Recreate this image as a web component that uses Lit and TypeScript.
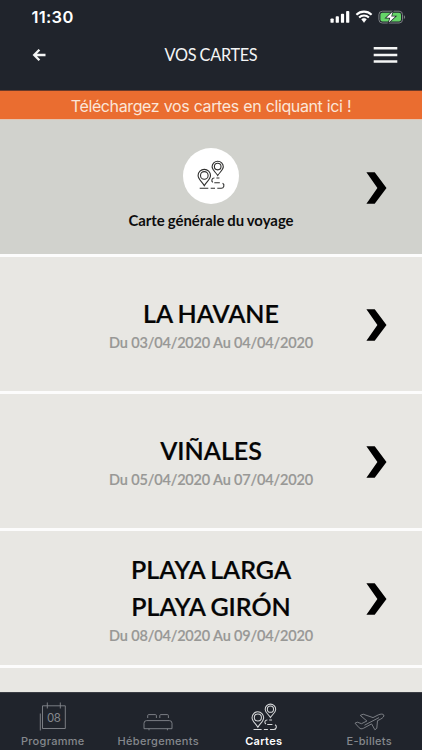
import { LitElement, html, css, svg } from "lit";
import { customElement, property } from "lit/decorators.js";

const routeGlyph = svg`
  <path d="M7.3 25.7C5.2 22 1.1 19.3 1.1 15.6a6.2 6.2 0 0 1 12.4 0C13.5 19.3 9.4 22 7.3 25.7Z"/>
  <circle cx="7.3" cy="15.4" r="3.8"/>
  <path d="M20.7 15.5C18.8 12.3 15.1 10 15.1 6.8a5.6 5.6 0 0 1 11.2 0C26.3 10 22.6 12.3 20.7 15.5Z"/>
  <circle cx="20.7" cy="6.6" r="3.3"/>
  <path d="M2.7 28.3H11.3M13.7 28.3H18M20.3 28.3H24a2.75 2.75 0 0 0 1.6-5.1M17.3 22.8H22.8M15.9 22.4a2.4 2.4 0 0 1 1.5-4.4M19.4 18H22.4"/>`;

@customElement("route-icon")
class RouteIcon extends LitElement {
  @property({ type: Number }) width = 28;
  static styles = css`
    :host { display: block; line-height: 0; }
    svg { fill: none; stroke: currentColor; stroke-width: 1.1; overflow: visible; }
  `;
  render() {
    return html`<svg width=${this.width} height=${(this.width * 30) / 28} viewBox="0 0 28 30">${routeGlyph}</svg>`;
  }
}

@customElement("status-bar")
class StatusBar extends LitElement {
  static styles = css`
    :host { display: flex; justify-content: space-between; align-items: center; height: 34px; padding: 0 16px 0 31.5px; color: #fff; }
    .time { font: 600 16.5px/20px Inter, sans-serif; letter-spacing: 0.3px; }
    svg { display: block; }
  `;
  render() {
    return html`
      <span class="time">11:30</span>
      <svg width="76" height="14" viewBox="0 0 76 14">
        <g fill="#fff">
          <rect x="0.5" y="8.4" width="3.2" height="4.4" rx="0.9"/>
          <rect x="5.7" y="6.2" width="3.2" height="6.6" rx="0.9"/>
          <rect x="10.9" y="3.8" width="3.2" height="9" rx="0.9"/>
          <rect x="16.1" y="1" width="3.2" height="11.8" rx="0.9"/>
          <path d="M31.6 9.2a3.6 3.6 0 0 1 4.8 0L34 12.4Z" stroke="#fff" stroke-width="0.5" stroke-linejoin="round"/>
        </g>
        <g fill="none" stroke="#fff" stroke-width="2.1">
          <path d="M26.4 4.7a10.9 10.9 0 0 1 15.2 0"/>
          <path d="M29.1 7.5a7 7 0 0 1 9.8 0"/>
        </g>
        <rect x="48.9" y="1.2" width="23.6" height="11.8" rx="3.4" fill="none" stroke="#7b7f83" stroke-width="1"/>
        <rect x="50.4" y="2.7" width="20.6" height="8.8" rx="2" fill="#65d468"/>
        <path d="M73.9 5.2c1.6.6 1.6 3.2 0 3.8Z" fill="#7b7f83"/>
        <path d="M62.6 1.8 56.3 7.7H60.3L58.8 12.4 65.3 6.4H61.2Z" fill="#fff" stroke="#20242c" stroke-width="1.5" paint-order="stroke"/>
      </svg>`;
  }
}

@customElement("map-row")
class MapRow extends LitElement {
  @property({ type: Array }) titles: string[] = [];
  @property() dates = "";
  @property({ type: Boolean, reflect: true }) overview = false;
  static styles = css`
    :host { display: grid; grid-template-columns: 90px 1fr 90px; align-items: center; box-sizing: border-box; height: 137px; flex: none; background: #e8e7e3; border-bottom: 3px solid #fcfcfc; text-align: center; font-family: Lato, sans-serif; }
    :host([overview]) { background: #d1d2cd; }
    .body { grid-column: 2; display: flex; flex-direction: column; align-items: center; white-space: nowrap; }
    :host([overview]) .body { padding-top: 3px; }
    .disc { display: grid; place-items: center; box-sizing: border-box; width: 56px; height: 56px; padding-bottom: 3px; border-radius: 50%; background: #fff; color: #30302f; }
    .caption { font-size: 14.9px; line-height: 18px; font-weight: 700; color: #0d0d0d; margin-top: 7px; word-spacing: -0.7px; }
    .title { font-size: 25px; line-height: 37px; font-weight: 600; color: #050505; word-spacing: -1px; -webkit-text-stroke: 0.2px #050505; }
    .dates { margin-top: 1px; font-size: 14.5px; line-height: 20px; font-weight: 600; color: #989896; letter-spacing: -0.17px; -webkit-text-stroke: 0.15px #989896; }
    .chevron { display: block; margin: 2px 0 0 34px; }
  `;
  render() {
    return html`
      <div class="body">
        ${this.overview
          ? html`<div class="disc"><route-icon></route-icon></div><div class="caption">${this.titles[0]}</div>`
          : html`${this.titles.map((t) => html`<div class="title">${t}</div>`)}<div class="dates">${this.dates}</div>`}
      </div>
      <svg class="chevron" width="21" height="32" viewBox="0 0 21 32"><path d="M.4 .3H8.7L20.5 16 8.7 31.7H.4L11.4 16Z" fill="#000"/></svg>`;
  }
}

@customElement("tab-bar")
class TabBar extends LitElement {
  static styles = css`
    :host { display: grid; grid-template-columns: repeat(4, 1fr); height: 57px; flex: none; background: #20242c; border-top: 1px solid #3a3d44; color: #85888d; }
    .tab { display: flex; flex-direction: column; align-items: center; font: 500 11px/14px Inter, sans-serif; letter-spacing: 0.3px; white-space: nowrap; }
    .icon { display: flex; justify-content: center; align-items: flex-end; height: 38px; margin-bottom: 3px; letter-spacing: 0; }
    .active { color: #fff; font-weight: 600; }
    .active .icon { color: #d6d8da; }
    svg { display: block; fill: none; stroke: currentColor; stroke-width: 0.9; }
    .day { fill: currentColor; stroke: none; font: 400 11.5px Inter, sans-serif; letter-spacing: -0.5px; }
  `;
  render() {
    return html`
      <div class="tab">
        <div class="icon"><svg width="28" height="30" viewBox="0 0 28 30">
          <path d="M3.5 4.8H26.3V27.5H3.5ZM1.3 12.5V29.5M8.3 1.5V7.5M21.3 1.5V7.5"/>
          <text class="day" x="14.8" y="20.6" text-anchor="middle">08</text>
        </svg></div>Programme
      </div>
      <div class="tab">
        <div class="icon"><svg width="30" height="18" viewBox="0 0 30 18">
          <path d="M4.7 5V2.6q0-1 1-1H12.4q1 0 1 1V5M16.8 5V2.6q0-1 1-1H24.4q1 0 1 1V5M1 15.7V10.3Q1 7.6 3.6 7.6H26.4Q29 7.6 29 10.3V15.7ZM6 15.7V17.3M24.4 15.7V17.3"/>
        </svg></div>Hébergements
      </div>
      <div class="tab active">
        <div class="icon"><route-icon .width=${26.3}></route-icon></div>Cartes
      </div>
      <div class="tab">
        <div class="icon"><svg width="31" height="18" viewBox="0 0 31 18">
          <path stroke-linejoin="round" d="M1 10.2 3.4 9.2 7.5 10.7 12.9 8 6.3 2.4 9.2 1.2 19 4.6 24.3 1.9C26.6.8 29.2.8 29.8 2S28.8 5 26.7 6.1L23.5 7.7 22.8 15.3 20.9 16.8 17.6 10.9 9.6 15.2C7.5 16.3 6.2 15.8 5.2 14.8ZM10.5 12.2 25 4.6"/>
        </svg></div>E-billets
      </div>`;
  }
}

@customElement("app-root")
class AppRoot extends LitElement {
  static styles = css`
    :host { display: flex; flex-direction: column; width: 422px; height: 750px; overflow: hidden; background: #e8e7e3; }
    .head { height: 90px; flex: none; background: #20242c; }
    .nav { display: grid; grid-template-columns: 60px 1fr 60px; align-items: center; height: 42px; color: #f4f5f5; }
    .nav svg { display: block; }
    .back { margin-left: 32px; }
    .menu { margin-left: 11px; }
    .heading { text-align: center; font: 400 16.3px/20px Lato, sans-serif; letter-spacing: -0.3px; word-spacing: -0.5px; }
    .banner { box-sizing: border-box; height: 30px; flex: none; border-top: 1px solid #6b3a29; border-bottom: 1px solid #e3c4b1; background: #ea6d30; color: #fbe6d9; text-align: center; font: 400 16px/30px Inter, sans-serif; letter-spacing: -0.38px; word-spacing: 0.3px; white-space: nowrap; }
    .list { flex: 1; min-height: 0; overflow: hidden; display: flex; flex-direction: column; }
  `;
  render() {
    return html`
      <div class="head">
        <status-bar></status-bar>
        <div class="nav">
          <svg class="back" width="15" height="14" viewBox="0 0 15 14" fill="none" stroke="currentColor" stroke-width="2.3"><path d="M13.5 7H2.5M7.4 1.7 2.2 7 7.4 12.3"/></svg>
          <span class="heading">VOS CARTES</span>
          <svg class="menu" width="25" height="18" viewBox="0 0 25 18"><path d="M.7 2.2H24.3M.7 9H24.3M.7 15.6H24.3" stroke="currentColor" stroke-width="2.5"/></svg>
        </div>
      </div>
      <div class="banner">Téléchargez vos cartes en cliquant ici !</div>
      <div class="list">
        <map-row overview .titles=${["Carte générale du voyage"]}></map-row>
        <map-row .titles=${["LA HAVANE"]} dates="Du 03/04/2020 Au 04/04/2020"></map-row>
        <map-row .titles=${["VIÑALES"]} dates="Du 05/04/2020 Au 07/04/2020"></map-row>
        <map-row .titles=${["PLAYA LARGA", "PLAYA GIRÓN"]} dates="Du 08/04/2020 Au 09/04/2020"></map-row>
      </div>
      <tab-bar></tab-bar>`;
  }
}
